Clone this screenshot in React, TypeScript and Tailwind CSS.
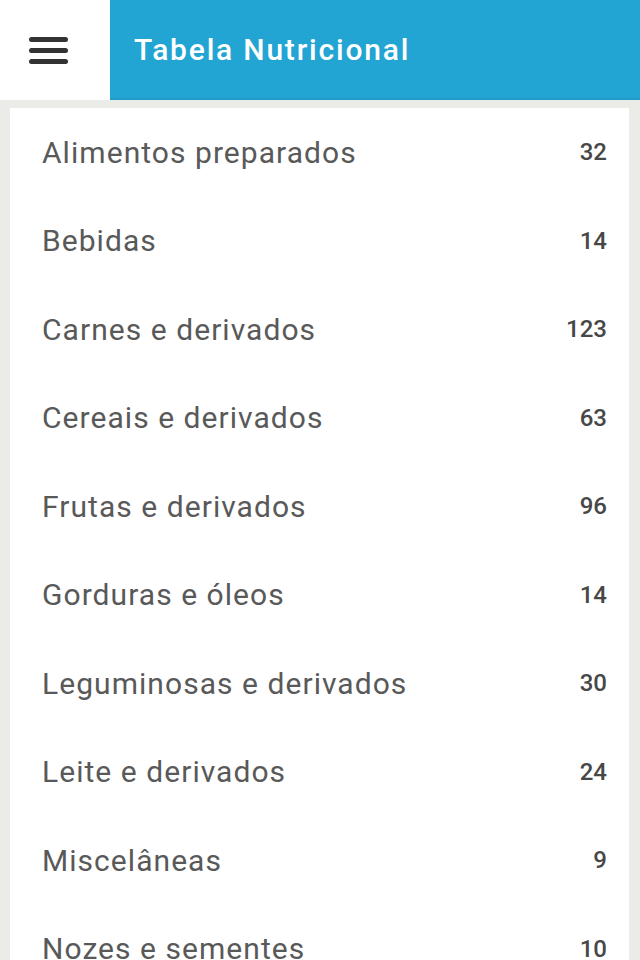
import React from "react";

type Category = { name: string; count: number };

const categories: Category[] = [
  { name: "Alimentos preparados", count: 32 },
  { name: "Bebidas", count: 14 },
  { name: "Carnes e derivados", count: 123 },
  { name: "Cereais e derivados", count: 63 },
  { name: "Frutas e derivados", count: 96 },
  { name: "Gorduras e óleos", count: 14 },
  { name: "Leguminosas e derivados", count: 30 },
  { name: "Leite e derivados", count: 24 },
  { name: "Miscelâneas", count: 9 },
  { name: "Nozes e sementes", count: 10 },
];

export default function App() {
  return (
    <div className="h-[960px] w-[640px] overflow-hidden bg-[#ebebe7] font-['Roboto',sans-serif]">
      <header className="flex h-[100px]">
        <div className="flex w-[110px] items-center bg-white pl-[29px]">
          <button type="button" aria-label="Menu" className="flex flex-col gap-[6px] pt-[1px]">
            <span className="block h-[5px] w-[39px] rounded-full bg-[#333]" />
            <span className="block h-[5px] w-[39px] rounded-full bg-[#333]" />
            <span className="block h-[5px] w-[39px] rounded-full bg-[#333]" />
          </button>
        </div>
        <div className="flex flex-1 items-center border-b-2 border-[#1e9bc6] bg-[#22a5d3] pl-[24px]">
          <h1 className="text-[30px] font-medium tracking-[1.8px] text-white">Tabela Nutricional</h1>
        </div>
      </header>

      <section className="ml-[10px] mr-[11px] mt-[8px] bg-white">
        <ul>
          {categories.map(cat => (
            <li key={cat.name} className="flex h-[88.5px] items-center justify-between pl-[32px] pr-[22px]">
              <span className="text-[30px] tracking-[1.05px] text-[#595959]">{cat.name}</span>
              <span className="text-[24px] font-medium text-[#474747]">{cat.count}</span>
            </li>
          ))}
        </ul>
      </section>
    </div>
  );
}
